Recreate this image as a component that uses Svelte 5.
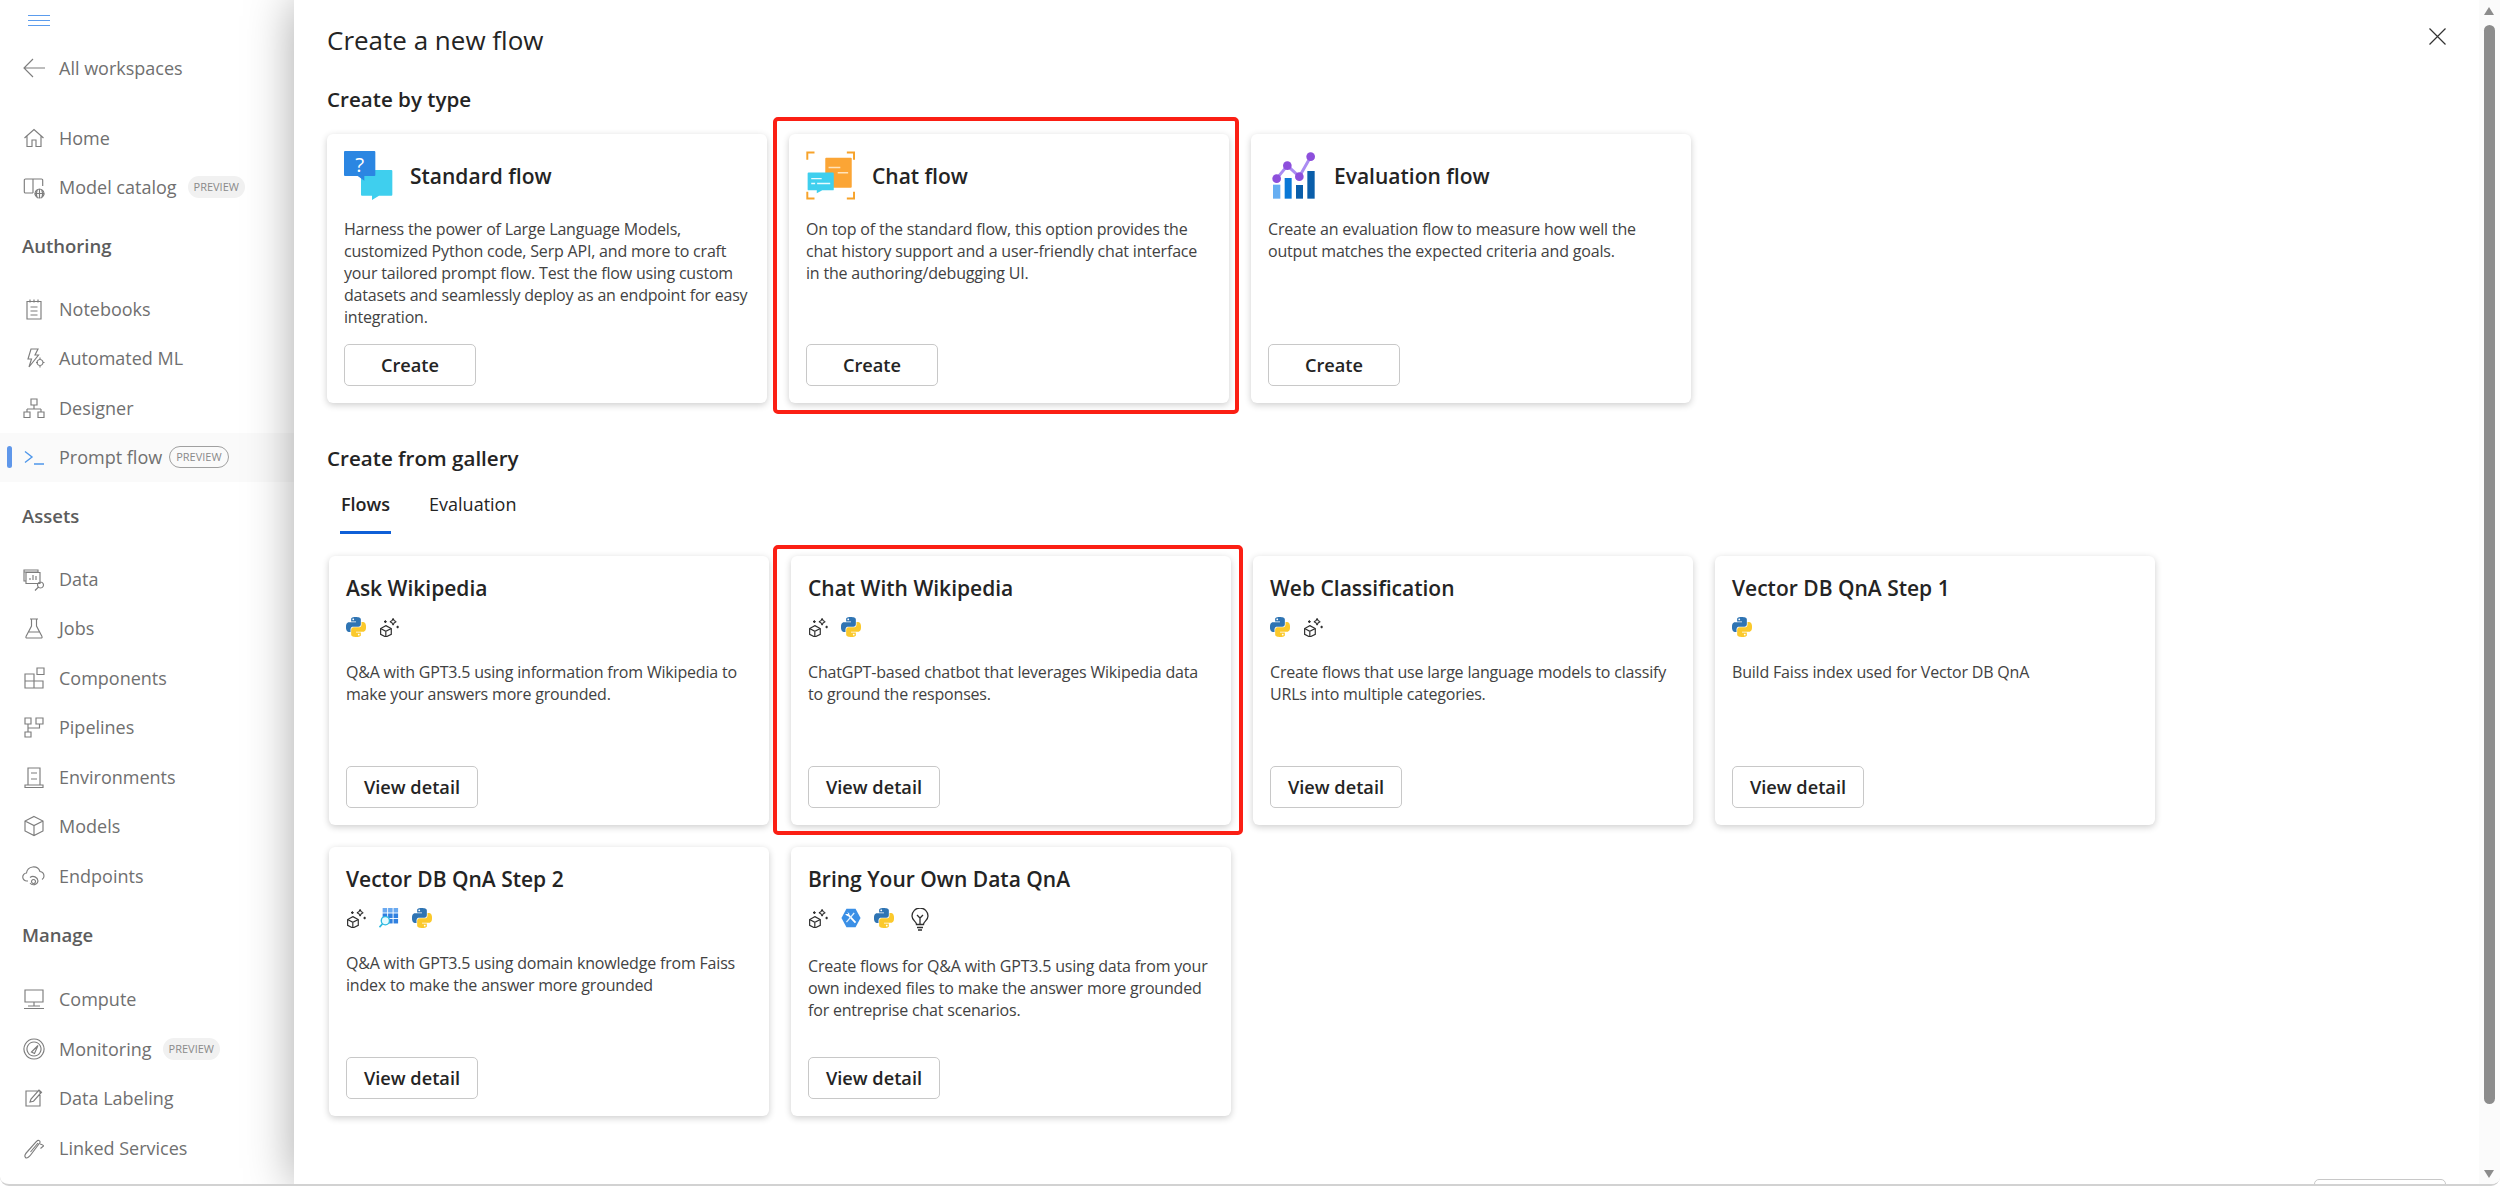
<script>
  const py1 = 'M14.25.18l.9.2.73.26.59.3.45.32.34.34.25.34.16.33.1.3.04.26.02.2-.01.13V8.5l-.05.63-.13.55-.21.46-.26.38-.3.31-.33.25-.35.19-.35.14-.33.1-.3.07-.26.04-.21.02H8.77l-.69.05-.59.14-.5.22-.41.27-.33.32-.27.35-.2.36-.15.37-.1.35-.07.32-.04.27-.02.21v3.06H3.17l-.21-.03-.28-.07-.32-.12-.35-.18-.36-.26-.36-.36-.35-.46-.32-.59-.28-.73-.21-.88-.14-1.05-.05-1.23.06-1.22.16-1.04.24-.87.32-.71.36-.57.4-.44.42-.33.42-.24.4-.16.36-.1.32-.05.24-.01h.16l.06.01h8.16v-.83H6.18l-.01-2.75-.02-.37.05-.34.11-.31.17-.28.25-.26.31-.23.38-.2.44-.18.51-.15.58-.12.64-.1.71-.06.77-.04.84-.02 1.27.05zm-6.3 1.98l-.23.33-.08.41.08.41.23.34.33.22.41.09.41-.09.33-.22.23-.34.08-.41-.08-.41-.23-.33-.33-.22-.41-.09-.41.09z';
  const py2 = 'M21.04 6.11l.28.06.32.12.35.18.36.27.36.35.35.47.32.59.28.73.21.88.14 1.04.05 1.23-.06 1.23-.16 1.04-.24.86-.32.71-.36.57-.4.45-.42.33-.42.24-.4.16-.36.09-.32.05-.24.02-.16-.01h-8.22v.82h5.84l.01 2.76.02.36-.05.34-.11.31-.17.29-.25.25-.31.24-.38.2-.44.17-.51.15-.58.13-.64.09-.71.07-.77.04-.84.01-1.27-.04-1.07-.14-.9-.2-.73-.25-.59-.3-.45-.33-.34-.34-.25-.34-.16-.33-.1-.3-.04-.25-.02-.2.01-.13v-5.34l.05-.64.13-.54.21-.46.26-.38.3-.32.33-.24.35-.2.35-.14.33-.1.3-.06.26-.04.21-.02.13-.01h5.84l.69-.05.59-.14.5-.21.41-.28.33-.32.27-.35.2-.36.15-.36.1-.35.07-.32.04-.28.02-.21V6.07h2.09l.14.01zm-6.47 14.25l-.23.33-.08.41.08.41.23.33.33.23.41.08.41-.08.33-.23.23-.33.08-.41-.08-.41-.23-.33-.33-.23-.41-.08-.41.08z';

  // sidebar glyphs, all on a 24 box
  const glyphs = {
    home: 'M2.500 12 12 3.500l9.500 8.500M5 10v10.500h5V14h4v6.500h5V10',
    catalog: 'M11 18H3.500a1.200 1.200 0 0 1-1.200-1.200V5.200A1.200 1.200 0 0 1 3.500 4H11v14M11 4h8.500a1.200 1.200 0 0 1 1.200 1.200V11M17.500 14a4.500 4.500 0 1 0 .01 0M13 18.500h9M17.500 14v9M15.500 15c-1.300 2.500-1.300 5.500 0 8M19.500 15c1.300 2.500 1.300 5.500 0 8',
    notebook: 'M5 4.500h14V22H5zM8 2.500v3M12 2.500v3M16 2.500v3M8.500 10h7M8.500 14h7M8.500 18h7',
    automl: 'M9 3h7l-3 6h3.500L7 21l2.500-8H6zM18 13.500a3 3 0 1 0 .01 0M18 11.500v2M18 19.500v2M14 16.500h2M20.500 16.500h2',
    designer: 'M9 3h6v6H9zM12 9v4M5 13h14M5 13v3M19 13v3M2 16h6v5.500H2zM16 16h6v5.500h-6z',
    data: 'M2 3h14v2H2zM4 5.500h14v11H4zM2 3v11h2M8 13v-2M11 13V8M14 13v-4M18.500 15a3 3 0 1 0 .01 0M16.500 20 13 23.500',
    jobs: 'M8 3h8M9.500 3v7L4 20.500a1 1 0 0 0 1 1.500h14a1 1 0 0 0 1-1.500L14.500 10V3M6.500 16h11',
    components: 'M3 8h9v7H3zM3 15h9v7H3zM12 15h9v7h-9zM15 2h7v6.500h-7z',
    pipelines: 'M3 3h6v6H3zM14 3h7v6h-7zM6 9v8M6 13h11.500V9M3 17h6v5H3z',
    env: 'M6 3h12v17H6zM3 20h18v2.500H3zM9 8h6M9 14h6',
    models: 'M12 2.500 21 7v10l-9 4.500L3 17V7zM3 7l9 4.500L21 7M12 11.500v10',
    endpoints: 'M6 17H5a4 4 0 0 1-.5-8A7 7 0 0 1 18 7.500a4.800 4.800 0 0 1 4 4.500 4 4 0 0 1-2 3.500M8 13.500a5 5 0 0 1 8 3.500 4.500 4.500 0 0 1-8 2M11.500 15.500a2 2 0 1 0 .01 0',
    compute: 'M3 3h18v12H3zM12 15v4M6 19h12M2 21.500h20',
    monitor: 'M12 2a10 10 0 1 0 .01 0M12 5a7 7 0 1 0 .01 0M9.500 15 16 8.500l-3.500 8z',
    label: 'M4 5h14v15H4zM18 9V5M8 16l1-3 8-9 2.500 2.200-8 9z',
    linked: 'M3.500 21.500c-2-2 0-4 2-6l9-10c1.500-2 4-1 3.500 1l-9 12c-1.500 2-4 4.500-5.500 3zM8.500 16 16 7M18 8c2 .5 3.500 1 3.500 2l-3 2.500'
  };

  const menu = [
    { items: [
      { label: 'Home', icon: 'home' },
      { label: 'Model catalog', icon: 'catalog', badge: 'solid' }
    ] },
    { title: 'Authoring', items: [
      { label: 'Notebooks', icon: 'notebook' },
      { label: 'Automated ML', icon: 'automl' },
      { label: 'Designer', icon: 'designer' },
      { label: 'Prompt flow', icon: 'prompt', badge: 'outline', active: true }
    ] },
    { title: 'Assets', items: [
      { label: 'Data', icon: 'data' },
      { label: 'Jobs', icon: 'jobs' },
      { label: 'Components', icon: 'components' },
      { label: 'Pipelines', icon: 'pipelines' },
      { label: 'Environments', icon: 'env' },
      { label: 'Models', icon: 'models' },
      { label: 'Endpoints', icon: 'endpoints' }
    ] },
    { title: 'Manage', loose: true, items: [
      { label: 'Compute', icon: 'compute' },
      { label: 'Monitoring', icon: 'monitor', badge: 'solid' },
      { label: 'Data Labeling', icon: 'label' },
      { label: 'Linked Services', icon: 'linked' }
    ] }
  ];

  const types = [
    { title: 'Standard flow', art: 'standard', text: 'Harness the power of Large Language Models, customized Python code, Serp API, and more to craft your tailored prompt flow. Test the flow using custom datasets and seamlessly deploy as an endpoint for easy integration.' },
    { title: 'Chat flow', art: 'chat', marked: true, text: 'On top of the standard flow, this option provides the chat history support and a user-friendly chat interface in the authoring/debugging UI.' },
    { title: 'Evaluation flow', art: 'evaluation', text: 'Create an evaluation flow to measure how well the output matches the expected criteria and goals.' }
  ];

  const gallery = [
    { title: 'Ask Wikipedia', tags: ['python', 'sparkle'], text: 'Q&A with GPT3.5 using information from Wikipedia to make your answers more grounded.' },
    { title: 'Chat With Wikipedia', tags: ['sparkle', 'python'], marked: true, text: 'ChatGPT-based chatbot that leverages Wikipedia data to ground the responses.' },
    { title: 'Web Classification', tags: ['python', 'sparkle'], text: 'Create flows that use large language models to classify URLs into multiple categories.' },
    { title: 'Vector DB QnA Step 1', tags: ['python'], text: 'Build Faiss index used for Vector DB QnA' },
    { title: 'Vector DB QnA Step 2', tags: ['sparkle', 'faiss', 'python'], text: 'Q&A with GPT3.5 using domain knowledge from Faiss index to make the answer more grounded' },
    { title: 'Bring Your Own Data QnA', tags: ['sparkle', 'tools', 'python', 'bulb'], text: 'Create flows for Q&A with GPT3.5 using data from your own indexed files to make the answer more grounded for entreprise chat scenarios.' }
  ];
</script>

{#snippet art(kind)}
  {#if kind === 'standard'}
    <svg class="art" viewBox="103 123 147 147">
      <path fill="#3fcfee" d="M157 180h88a3 3 0 0 1 3 3v71a3 3 0 0 1-3 3h-37l-21 13v-13h-30a3 3 0 0 1-3-3v-71a3 3 0 0 1 3-3z" />
      <path fill="#2b86e2" d="M106 123h88a3 3 0 0 1 3 3v69a3 3 0 0 1-3 3h-30v14l-20-14h-38a3 3 0 0 1-3-3v-69a3 3 0 0 1 3-3z" />
      <text x="150" y="186" fill="#fff" font-size="62" text-anchor="middle" font-family="Open Sans, sans-serif">?</text>
    </svg>
  {:else if kind === 'chat'}
    <svg class="art" viewBox="108 123 150 147">
      <g fill="none" stroke="#f7a32b" stroke-width="6">
        <path d="M134 126h-22v22M233 126h22v22M112 246v21h22M255 246v21h-22" />
      </g>
      <rect x="167" y="142" width="81" height="92" rx="3" fill="#fba535" />
      <path d="M177 172h36M205 188h32" stroke="#ffe3bb" stroke-width="4" />
      <path fill="#3fcfee" d="M116 187h74a3 3 0 0 1 3 3v49a3 3 0 0 1-3 3h-32l-17 9v-9h-25a3 3 0 0 1-3-3v-49a3 3 0 0 1 3-3z" />
      <path d="M124 206h32M124 221h12M142 221h40" stroke="#e8fbff" stroke-width="4" />
    </svg>
  {:else}
    <svg class="art" viewBox="84 123 147 147">
      <rect x="99" y="224" width="22" height="42" fill="#66aef2" />
      <rect x="134" y="204" width="21" height="62" fill="#0a78d6" />
      <rect x="168" y="225" width="21" height="41" fill="#0a5eaa" />
      <rect x="202" y="183" width="22" height="83" fill="#0a5eaa" />
      <path d="M110 206 142 167 178 200 212 140" fill="none" stroke="#ab8cf2" stroke-width="9" />
      <circle cx="110" cy="206" r="13" fill="#8d4fdc" />
      <circle cx="142" cy="167" r="13" fill="#8d4fdc" />
      <circle cx="178" cy="200" r="13" fill="#8d4fdc" />
      <circle cx="212" cy="140" r="13" fill="#8d4fdc" />
    </svg>
  {/if}
{/snippet}

{#snippet tag(kind)}
  {#if kind === 'python'}
    <svg class="tag" viewBox="0 0 24 24">
      <path fill="#2f74b3" d={py1} />
      <path fill="#fbc92c" d={py2} />
    </svg>
  {:else if kind === 'sparkle'}
    <svg class="tag" viewBox="0 0 22 22">
      <g fill="none" stroke="#2e2e2e" stroke-width="1.300">
        <path d="M7.500 9.500 13.500 12.700v6.300L7.500 22 1.800 19v-6.300zM1.800 12.700l5.700 3 6-3M7.500 15.700V22" />
        <path d="M15.500 1.500c.4 2.200 1.300 3.200 3.500 3.700-2.200.5-3.100 1.500-3.500 3.700-.4-2.200-1.300-3.200-3.500-3.700 2.200-.5 3.100-1.500 3.500-3.700z" />
        <path d="M7 3.500v3M5.500 5h3M20.500 9.500v3M19 11h3" />
      </g>
    </svg>
  {:else if kind === 'faiss'}
    <svg class="tag" viewBox="0 0 22 22">
      <g fill="#3d8ee8">
        {#each [4, 10, 16] as x}
          {#each [0, 6, 12] as y}
            <rect x={x} {y} width="5" height="5" fill={y === 0 ? '#6aa9f0' : '#2f80e0'} />
          {/each}
        {/each}
      </g>
      <circle cx="7" cy="14" r="4.500" fill="#e6fbff" stroke="#2bb9e0" stroke-width="1.500" />
      <path d="M3.800 17.500.5 21" stroke="#2bb9e0" stroke-width="1.800" />
    </svg>
  {:else if kind === 'tools'}
    <svg class="tag" viewBox="0 0 22 22">
      <path fill="#3a8fe6" d="M6 .8h10l5.500 10.200L16 21.200H6L.5 11z" />
      <path d="M8 7.500 16 16" stroke="#fff" stroke-width="2" />
      <path d="M14.500 5.500 6 15.500" stroke="#dff0ff" stroke-width="1.400" />
      <path d="M4.500 6.500 7 9l2.500-2.500L7 4l1 2.500z" fill="#fff" />
    </svg>
  {:else}
    <svg class="tag bulb" viewBox="0 0 18 23">
      <g fill="none" stroke="#2e2e2e" stroke-width="1.300">
        <path d="M5.500 16.500c0-3-4.500-4-4.500-8.500a8 8 0 0 1 16 0c0 4.500-4.500 5.500-4.500 8.500zM6 19.500h6M7 22h4" />
        <path d="M6 7l3 3 3-3M9 10v6" />
      </g>
    </svg>
  {/if}
{/snippet}

<div class="window">
  <nav class="sidebar">
    <div class="burger"><span></span><span></span><span></span></div>
    <div class="back">
      <svg class="glyph" viewBox="0 0 24 24"><path d="M23 12H2M11 3l-9 9 9 9" /></svg>
      All workspaces
    </div>

    {#each menu as group}
      {#if group.title}<div class="section" class:loose={group.loose}>{group.title}</div>{/if}
      {#each group.items as item}
        <div class="item" class:active={item.active}>
          {#if item.active}<i class="marker"></i>{/if}
          {#if item.icon === 'prompt'}
            <svg class="glyph blue" viewBox="0 0 24 24"><path d="M3 6.500 10 12l-7 5.500M12 19h10" /></svg>
          {:else}
            <svg class="glyph" viewBox="0 0 24 24"><path d={glyphs[item.icon]} /></svg>
          {/if}
          <span>{item.label}</span>
          {#if item.badge}<span class="badge {item.badge}">PREVIEW</span>{/if}
        </div>
      {/each}
    {/each}
  </nav>

  <section class="panel">
    <main class="main">
      <header class="top">
        <h1>Create a new flow</h1>
        <svg class="close" viewBox="0 0 17 17"><path d="M.5.500l16 16M16.500.500l-16 16" /></svg>
      </header>

      <h2>Create by type</h2>
      <div class="cards types">
        {#each types as c}
          <article class="card" class:marked={c.marked}>
            <div class="head">
              {@render art(c.art)}
              <h3>{c.title}</h3>
            </div>
            <p class="lead">{c.text}</p>
            <button>Create</button>
          </article>
        {/each}
      </div>

      <h2 class="second">Create from gallery</h2>
      <div class="tabs">
        <span class="tab on">Flows</span>
        <span class="tab">Evaluation</span>
      </div>

      <div class="cards list">
        {#each gallery as c}
          <article class="card" class:marked={c.marked}>
            <h3>{c.title}</h3>
            <div class="tags">
              {#each c.tags as t}
                <span class="slot">{@render tag(t)}</span>
              {/each}
            </div>
            <p>{c.text}</p>
            <button>View detail</button>
          </article>
        {/each}
      </div>

      <div class="footer"><button aria-label="Close"></button></div>
    </main>

    <div class="scrollbar">
      <i class="up"></i>
      <div class="thumb"></div>
      <i class="down"></i>
    </div>
  </section>
</div>

<style>
  :global(body) {
    background: #fff;
    font-family: 'Open Sans', 'Noto Sans', sans-serif;
    color: #242424;
  }

  .window {
    display: flex;
    height: 1186px;
    box-sizing: border-box;
    overflow: hidden;
    border-bottom: 2px solid #d2d2d2;
    border-radius: 0 0 9px 9px;
  }

  .sidebar {
    width: 294px;
    flex: none;
    padding-top: 15px;
    box-sizing: border-box;
    color: #707070;
    font-size: 18px;
  }

  .burger {
    display: flex;
    flex-direction: column;
    gap: 4px;
    width: 22px;
    margin: 0 0 20px 28px;
  }

  .burger span {
    height: 1px;
    background: #5b9ced;
  }

  .back {
    display: flex;
    align-items: center;
    gap: 13px;
    height: 44px;
    padding-left: 22px;
    margin-bottom: 23px;
  }

  .glyph {
    width: 24px;
    height: 24px;
    flex: none;
    fill: none;
    stroke: #7d7d7d;
    stroke-width: 1.15;
  }

  .glyph.blue {
    stroke: #4f97ea;
    stroke-width: 1.4;
  }

  .item {
    position: relative;
    display: flex;
    align-items: center;
    gap: 13px;
    height: 49.5px;
    padding-left: 22px;
  }

  .item.active {
    background: #fafafa;
  }

  .marker {
    position: absolute;
    left: 7px;
    top: 13px;
    width: 5px;
    height: 22px;
    border-radius: 3px;
    background: #5f97ea;
  }

  .section {
    height: 24px;
    line-height: 24px;
    margin: 22px 0 26px 22px;
    font-size: 18.500px;
    font-weight: 600;
    color: #5c5c5c;
  }

  .section.loose {
    margin-bottom: 28px;
  }

  .badge {
    font-size: 11px;
    line-height: 20px;
    padding: 0 6px;
    margin-left: -6px;
    border-radius: 11px;
    color: #8a8a8a;
  }

  .badge.solid {
    background: #f1f1f1;
    padding: 1px 6px;
    margin-left: -2px;
  }

  .badge.outline {
    border: 1px solid #a0a0a0;
  }

  .panel {
    position: relative;
    z-index: 1;
    flex: 1;
    display: flex;
    background: #fff;
    box-shadow: 0 0 45px rgba(0, 0, 0, 0.34);
  }

  .main {
    flex: 1;
    padding: 22px 33px 0 33px;
    box-sizing: border-box;
    min-width: 0;
  }

  .top {
    display: flex;
    justify-content: space-between;
  }

  h1 {
    margin: 0;
    font-size: 26px;
    font-weight: 400;
    line-height: 36px;
  }

  .close {
    width: 17px;
    height: 17px;
    margin-top: 6px;
    fill: none;
    stroke: #333;
    stroke-width: 1.2;
  }

  h2 {
    margin: 27px 0 0;
    font-size: 20.600px;
    font-weight: 600;
    line-height: 28px;
  }

  h2.second {
    margin-top: 41px;
  }

  .cards {
    display: grid;
    grid-template-columns: repeat(4, 440px);
    gap: 22px;
  }

  .types {
    margin-top: 21px;
  }

  .list {
    margin: 22px 0 0 2px;
  }

  .card {
    position: relative;
    display: flex;
    flex-direction: column;
    align-items: flex-start;
    height: 269px;
    box-sizing: border-box;
    padding: 17px;
    background: #fff;
    border-radius: 6px;
    box-shadow: 0 2px 7px rgba(0, 0, 0, 0.2);
  }

  /* the red annotation drawn round two cards */
  .card.marked::after {
    content: '';
    position: absolute;
    inset: -17px -10px -11px -16px;
    border: 4px solid #fb1f14;
    border-radius: 5px;
    pointer-events: none;
  }

  .list .card.marked::after {
    inset: -11px -12px -10px -18px;
  }

  .head {
    display: flex;
    align-items: center;
    gap: 17px;
  }

  .art {
    width: 49px;
    height: 49px;
    flex: none;
  }

  h3 {
    margin: 0;
    font-size: 21px;
    font-weight: 600;
    line-height: 28px;
  }

  p {
    margin: 24px 0 0;
    font-size: 16px;
    letter-spacing: -0.19px;
    line-height: 22px;
    color: #424242;
  }

  p.lead {
    margin-top: 18px;
  }

  .list h3 {
    margin-top: 1px;
  }

  .tags {
    display: flex;
    gap: 11px;
    min-height: 20px;
    margin-top: 15px;
  }

  .slot {
    display: block;
    width: 22px;
    height: 20px;
  }

  .tag {
    display: block;
    width: 20px;
    height: 20px;
  }

  .tag.bulb {
    width: 18px;
    height: 23px;
    margin-left: 4px;
  }

  .tags:has(.bulb) {
    min-height: 23px;
  }

  button {
    margin-top: auto;
    width: 132px;
    height: 42px;
    padding: 0;
    background: #fff;
    border: 1px solid #c8c8c8;
    border-radius: 5px;
    font: 600 18.200px 'Open Sans', 'Noto Sans', sans-serif;
    color: #242424;
  }

  .tabs {
    display: flex;
    gap: 37px;
    margin: 8px 0 0 13px;
  }

  .tab {
    padding: 12px 1px 15px;
    font-size: 18px;
    line-height: 24px;
    border-bottom: 3px solid transparent;
  }

  .tab.on {
    font-weight: 600;
    border-bottom-color: #0f5fd7;
  }

  .footer {
    display: flex;
    justify-content: flex-end;
    margin-top: 63px;
  }

  .scrollbar {
    position: relative;
    flex: none;
    width: 21px;
    background: #fbfbfb;
    padding: 25px 5px 0;
    box-sizing: border-box;
  }

  .thumb {
    height: 1079px;
    border-radius: 6px;
    background: #8c8c8c;
  }

  .up,
  .down {
    position: absolute;
    left: 5px;
    width: 0;
    height: 0;
    border-left: 5.5px solid transparent;
    border-right: 5.5px solid transparent;
  }

  .up {
    top: 7px;
    border-bottom: 8px solid #8c8c8c;
  }

  .down {
    bottom: 6px;
    border-top: 8px solid #8c8c8c;
  }
</style>
